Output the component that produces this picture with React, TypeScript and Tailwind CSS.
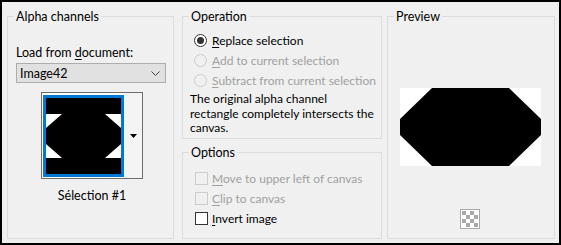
import React from "react";

const font = { fontFamily: 'Lato, "Noto Sans", sans-serif' };

const Radio = ({ checked, disabled }: { checked?: boolean; disabled?: boolean }) => (
  <span
    className={`flex h-[13px] w-[13px] shrink-0 items-center justify-center rounded-full border ${
      disabled ? "border-[#cccccc] bg-[#f0f0f0]" : "border-[#333333] bg-white"
    }`}
  >
    {checked && <span className="h-[7px] w-[7px] rounded-full bg-[#333333]" />}
  </span>
);

const Check = ({ disabled }: { disabled?: boolean }) => (
  <span
    className={`block h-[13px] w-[13px] shrink-0 border ${
      disabled ? "border-[#cccccc] bg-[#f0f0f0]" : "border-[#333333] bg-white"
    }`}
  />
);

const Legend = ({ children }: { children: React.ReactNode }) => (
  <legend className="px-[2px] text-[12.5px] leading-[15px] text-black">{children}</legend>
);

export default function App() {
  return (
    <div
      className="flex h-[245px] w-[561px] border-2 border-black bg-[#f0f0f0] pl-[5px] pt-[7px] text-[12px] text-black whitespace-nowrap"
      style={font}
    >
      {/* Alpha channels */}
      <fieldset className="h-[230px] w-[167px] border border-[#dcdcdc] pl-[6px]">
        <Legend>Alpha channels</Legend>
        <div className="mt-[21px] ml-[2px] text-[12.5px] leading-[15px]">
          Load from <u className="underline-offset-2">d</u>ocument:
        </div>
        <div className="mt-[3px] ml-[2px] flex h-5 w-[150px] items-center justify-between border border-[#adadad] bg-[#e1e1e1] pl-[3px] pr-[5px]">
          <span className="text-[12.5px] leading-[15px]">Image42</span>
          <svg width="9" height="5" viewBox="0 0 9 5">
            <polyline points="0.5,0.5 4.5,4.5 8.5,0.5" fill="none" stroke="#444" strokeWidth="1" />
          </svg>
        </div>
        <div className="mt-[9px] ml-[27px] flex w-[102px] flex-col items-center">
          <div className="flex h-[87px] w-[102px] border border-[#6d6d6d] bg-white">
            <div className="mt-[2px] ml-[1px] h-[82px] w-[81px] border-[3px] border-[#0078d7] bg-black">
              <svg width="75" height="76" viewBox="0 0 75 76" className="block">
                <rect width="75" height="76" fill="#000" />
                <polygon points="0,16 16,16 0,30" fill="#fff" />
                <polygon points="75,16 59,16 75,30" fill="#fff" />
                <polygon points="0,60 16,60 0,46" fill="#fff" />
                <polygon points="75,60 59,60 75,46" fill="#fff" />
              </svg>
            </div>
            <div className="flex flex-1 items-center justify-center bg-[#f4f4f4]">
              <svg width="7" height="4" viewBox="0 0 7 4">
                <polygon points="0,0 7,0 3.5,4" fill="#000" />
              </svg>
            </div>
          </div>
          <div className="mt-[9px] text-[12.5px] leading-[15px]">Sélection #1</div>
        </div>
      </fieldset>

      {/* Operation + Options */}
      <div className="ml-[8px] flex w-[200px] flex-col">
        <fieldset className="h-[130px] border border-[#dcdcdc] pl-[6px]">
          <Legend>Operation</Legend>
          <div className="mt-[6px] flex flex-col">
            <div className="flex h-5 items-center gap-[5px] pl-[5px]">
              <Radio checked />
              <span className="leading-[15px]">
                <u className="underline-offset-2">R</u>eplace selection
              </span>
            </div>
            <div className="flex h-5 items-center gap-[5px] pl-[5px] text-[#a0a0a0]">
              <Radio disabled />
              <span className="leading-[15px]">
                <u className="underline-offset-2">A</u>dd to current selection
              </span>
            </div>
            <div className="flex h-5 items-center gap-[5px] pl-[5px] text-[#a0a0a0]">
              <Radio disabled />
              <span className="leading-[15px]">
                <u className="underline-offset-2">S</u>ubtract from current selection
              </span>
            </div>
          </div>
          <p className="mt-[2px] ml-[1px] leading-[14.5px]">
            The original alpha channel
            <br />
            rectangle completely intersects the
            <br />
            canvas.
          </p>
        </fieldset>
        <fieldset className="mt-[6px] h-[94px] border border-[#dcdcdc] pl-[6px]">
          <Legend>Options</Legend>
          <div className="mt-[8px] flex flex-col">
            <div className="flex h-5 items-center gap-[4px] pl-[6px] text-[#a0a0a0]">
              <Check disabled />
              <span className="leading-[15px]">
                <u className="underline-offset-2">M</u>ove to upper left of canvas
              </span>
            </div>
            <div className="flex h-5 items-center gap-[4px] pl-[6px] text-[#a0a0a0]">
              <Check disabled />
              <span className="leading-[15px]">
                <u className="underline-offset-2">C</u>lip to canvas
              </span>
            </div>
            <div className="flex h-5 items-center gap-[4px] pl-[6px]">
              <Check />
              <span className="leading-[15px]">
                <u className="underline-offset-2">I</u>nvert image
              </span>
            </div>
          </div>
        </fieldset>
      </div>

      {/* Preview */}
      <fieldset className="ml-[5px] flex h-[230px] w-[168px] flex-col border border-[#dcdcdc] pl-[6px]">
        <Legend>Preview</Legend>
        <div className="mt-[64px] ml-[6px] h-[78px] w-[141px] bg-white">
          <svg width="141" height="78" viewBox="0 0 141 78" className="block">
            <polygon points="32,0 109,0 141,31 141,47 109,78 32,78 0,47 0,31" fill="#000" />
          </svg>
        </div>
        <div className="mt-[43px] ml-[66px] h-5 w-5 border border-[#a8a8a8] bg-white p-[1px]">
          <svg width="16" height="16" viewBox="0 0 16 16" className="block">
            <rect width="16" height="16" fill="#fff" />
            <rect x="0" y="0" width="4" height="4" fill="#a8a8a8" />
            <rect x="8" y="0" width="4" height="4" fill="#a8a8a8" />
            <rect x="4" y="4" width="4" height="4" fill="#a8a8a8" />
            <rect x="12" y="4" width="4" height="4" fill="#a8a8a8" />
            <rect x="0" y="8" width="4" height="4" fill="#a8a8a8" />
            <rect x="8" y="8" width="4" height="4" fill="#a8a8a8" />
            <rect x="4" y="12" width="4" height="4" fill="#a8a8a8" />
            <rect x="12" y="12" width="4" height="4" fill="#a8a8a8" />
          </svg>
        </div>
      </fieldset>
    </div>
  );
}
